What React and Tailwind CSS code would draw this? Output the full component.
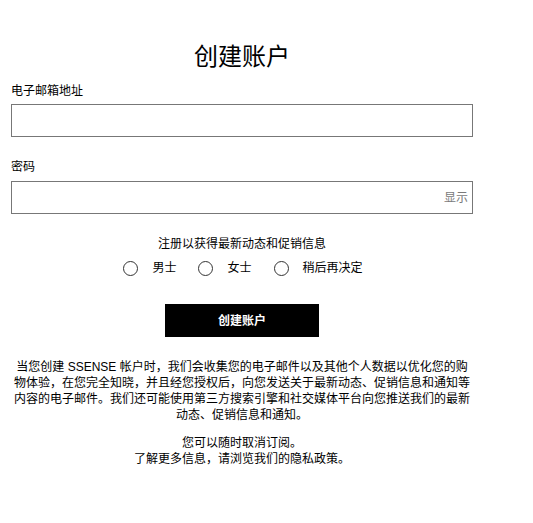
const font = { fontFamily: '"Liberation Sans", "Noto Sans CJK SC", sans-serif' }

function Radio({ label }) {
  return (
    <label className="flex items-center">
      <span className="w-[15px] h-[15px] rounded-full border border-[#333] bg-white" />
      <span className="ml-[14px] text-xs leading-4 text-black">{label}</span>
    </label>
  )
}

export default function App() {
  return (
    <div className="bg-white min-h-[523px] w-[533px]" style={font}>
      <div className="w-[462px] ml-[11px] flex flex-col text-black">
        <h1 className="text-[24px] leading-8 text-center pt-[41px]">创建账户</h1>

        <label className="text-xs leading-4 mt-[10px]">电子邮箱地址</label>
        <div className="mt-[5px] h-[33px] border border-[#777]" />

        <label className="text-xs leading-4 mt-[22px]">密码</label>
        <div className="mt-[6px] h-[33px] border border-[#777] flex items-center justify-end pr-[4px]">
          <span className="text-xs text-[#7a7a7a]">显示</span>
        </div>

        <p className="text-xs leading-4 text-center mt-[22px]">注册以获得最新动态和促销信息</p>
        <div className="flex justify-center gap-[22px] mt-[8px] pl-[2px]">
          <Radio label="男士" />
          <Radio label="女士" />
          <Radio label="稍后再决定" />
        </div>

        <button className="self-center mt-[28px] w-[154px] h-[33px] bg-black text-white text-xs font-bold">
          创建账户
        </button>

        <p className="text-xs leading-4 text-center mt-[22px]">
          当您创建 SSENSE 帐户时，我们会收集您的电子邮件以及其他个人数据以优化您的购物体验，在您完全知晓，并且经您授权后，向您发送关于最新动态、促销信息和通知等内容的电子邮件。我们还可能使用第三方搜索引擎和社交媒体平台向您推送我们的最新动态、促销信息和通知。
        </p>
        <p className="text-xs leading-4 text-center mt-[12px]">
          您可以随时取消订阅。
          <br />
          了解更多信息，请浏览我们的隐私政策。
        </p>
      </div>
    </div>
  )
}
